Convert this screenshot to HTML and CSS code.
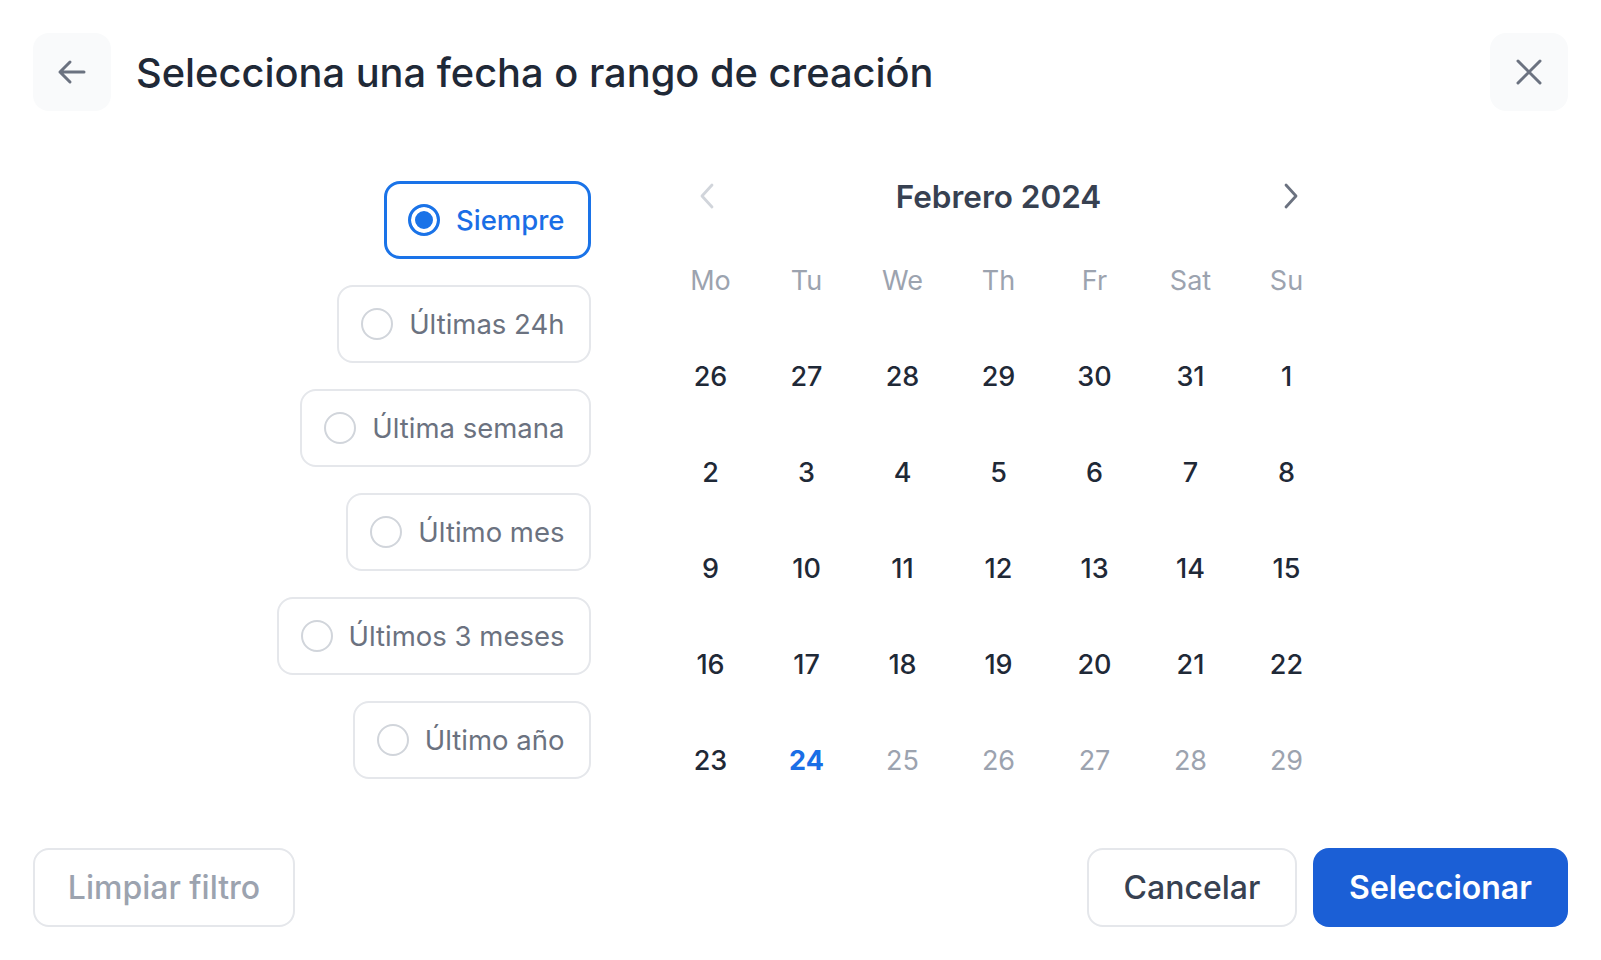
FILE: index.html
```html
<!DOCTYPE html>
<html lang="es">
<head>
<meta charset="utf-8">
<title>Selecciona una fecha</title>
<link rel="stylesheet" href="styles.css">
</head>
<body>
<div class="dialog">
  <header class="head">
    <button class="icon-btn" aria-label="Volver">
      <svg width="32" height="32" viewBox="0 0 32 32" fill="none" stroke="#6b7280" stroke-width="3" stroke-linecap="round" stroke-linejoin="round"><path d="M28 16H4M14 6L4 16l10 10"/></svg>
    </button>
    <h1 class="title">Selecciona una fecha o rango de creación</h1>
    <button class="icon-btn close" aria-label="Cerrar">
      <svg width="28" height="28" viewBox="0 0 28 28" fill="none" stroke="#6b7280" stroke-width="3" stroke-linecap="round"><path d="M3 3l22 22M25 3L3 25"/></svg>
    </button>
  </header>

  <main class="body">
    <div class="options">
      <label class="opt selected"><span class="radio on"></span><span>Siempre</span></label>
      <label class="opt"><span class="radio"></span><span>Últimas 24h</span></label>
      <label class="opt"><span class="radio"></span><span>Última semana</span></label>
      <label class="opt"><span class="radio"></span><span>Último mes</span></label>
      <label class="opt"><span class="radio"></span><span>Últimos 3 meses</span></label>
      <label class="opt"><span class="radio"></span><span>Último año</span></label>
    </div>

    <section class="calendar">
      <div class="cal-head">
        <span class="nav">
          <svg width="16" height="28" viewBox="0 0 16 28" fill="none" stroke="#d1d5db" stroke-width="2.8" stroke-linecap="round" stroke-linejoin="round"><path d="M13 3L3 14l10 11"/></svg>
        </span>
        <span class="month">Febrero 2024</span>
        <span class="nav">
          <svg width="16" height="28" viewBox="0 0 16 28" fill="none" stroke="#6b7280" stroke-width="2.8" stroke-linecap="round" stroke-linejoin="round"><path d="M3 3l10 11L3 25"/></svg>
        </span>
      </div>
      <div class="grid">
        <span class="wd">Mo</span><span class="wd">Tu</span><span class="wd">We</span><span class="wd">Th</span><span class="wd">Fr</span><span class="wd">Sat</span><span class="wd">Su</span>
        <span class="d">26</span><span class="d">27</span><span class="d">28</span><span class="d">29</span><span class="d">30</span><span class="d">31</span><span class="d">1</span>
        <span class="d">2</span><span class="d">3</span><span class="d">4</span><span class="d">5</span><span class="d">6</span><span class="d">7</span><span class="d">8</span>
        <span class="d">9</span><span class="d">10</span><span class="d">11</span><span class="d">12</span><span class="d">13</span><span class="d">14</span><span class="d">15</span>
        <span class="d">16</span><span class="d">17</span><span class="d">18</span><span class="d">19</span><span class="d">20</span><span class="d">21</span><span class="d">22</span>
        <span class="d">23</span><span class="d today">24</span><span class="d out">25</span><span class="d out">26</span><span class="d out">27</span><span class="d out">28</span><span class="d out">29</span>
      </div>
    </section>
  </main>

  <footer class="foot">
    <button class="btn ghost">Limpiar filtro</button>
    <div class="actions">
      <button class="btn secondary">Cancelar</button>
      <button class="btn primary">Seleccionar</button>
    </div>
  </footer>
</div>
</body>
</html>
```

FILE: styles.css
```css
* { box-sizing: border-box; }
html, body { margin: 0; padding: 0; background: #fff; }
body {
  font-family: Inter, "Noto Sans", sans-serif;
  color: #1f2937;
  width: 1601px;
  height: 960px;
  overflow: hidden;
}
button { font-family: inherit; cursor: pointer; }

.dialog {
  padding: 33px;
  display: flex;
  flex-direction: column;
  height: 960px;
}

.head {
  display: flex;
  align-items: center;
  height: 78px;
}
.icon-btn {
  width: 78px;
  height: 78px;
  border: none;
  border-radius: 16px;
  background: #f9fafb;
  display: flex;
  align-items: center;
  justify-content: center;
  padding: 0;
  flex: none;
}
.title {
  margin: 0 0 0 25px;
  font-size: 39.8px;
  font-weight: 500;
  color: #1f2937;
  flex: 1;
  white-space: nowrap;
}

.body {
  display: flex;
  justify-content: center;
  gap: 72px;
  margin-top: 49px;
}
.options {
  width: 324px;
  display: flex;
  flex-direction: column;
  align-items: flex-end;
  gap: 26px;
  margin-top: 21px;
}
.opt {
  height: 78px;
  display: flex;
  align-items: center;
  gap: 16px;
  padding: 0 24px 0 22px;
  border: 2px solid #e5e7eb;
  border-radius: 16px;
  font-size: 27.5px;
  color: #6b7280;
  background: #fff;
  white-space: nowrap;
}
.opt.selected {
  border: 3px solid #1a73e8;
  color: #1a6ee6;
  font-weight: 500;
  padding: 0 23px 0 21px;
}
.radio {
  width: 32px;
  height: 32px;
  border-radius: 50%;
  border: 2px solid #d1d5db;
  flex: none;
}
.radio.on {
  border: 3px solid #1a73e8;
  background: #1a73e8;
  box-shadow: inset 0 0 0 4px #fff;
}

.calendar {
  width: 672px;
}
.cal-head {
  height: 72px;
  display: flex;
  align-items: center;
  justify-content: space-between;
}
.nav {
  width: 96px;
  display: flex;
  justify-content: center;
}
.nav:first-child { padding-right: 8px; }
.nav:last-child { padding-left: 8px; }
.month {
  font-size: 31.5px;
  font-weight: 600;
  color: #374151;
}
.grid {
  display: grid;
  grid-template-columns: repeat(7, 96px);
  grid-auto-rows: 96px;
}
.grid span {
  display: flex;
  align-items: center;
  justify-content: center;
  font-size: 27px;
}
.wd { color: #9ca3af; }
.d { color: #1f2937; font-weight: 500; }
.d.out { color: #9ca3af; font-weight: 400; }
.d.today { color: #1a6ee6; font-weight: 700; }

.foot {
  margin-top: 40px;
  display: flex;
  justify-content: space-between;
  align-items: center;
}
.actions { display: flex; gap: 16px; }
.btn {
  height: 79px;
  border-radius: 16px;
  font-size: 32px;
  font-weight: 500;
  padding: 0;
  white-space: nowrap;
}
.btn.ghost {
  background: #fff;
  border: 2px solid #e5e7eb;
  color: #9ca3af;
  width: 262px;
}
.btn.secondary {
  background: #fff;
  border: 2px solid #e5e7eb;
  color: #374151;
  width: 210px;
}
.btn.primary {
  background: #1b5fd6;
  border: none;
  color: #fff;
  font-weight: 600;
  width: 255px;
}
```
